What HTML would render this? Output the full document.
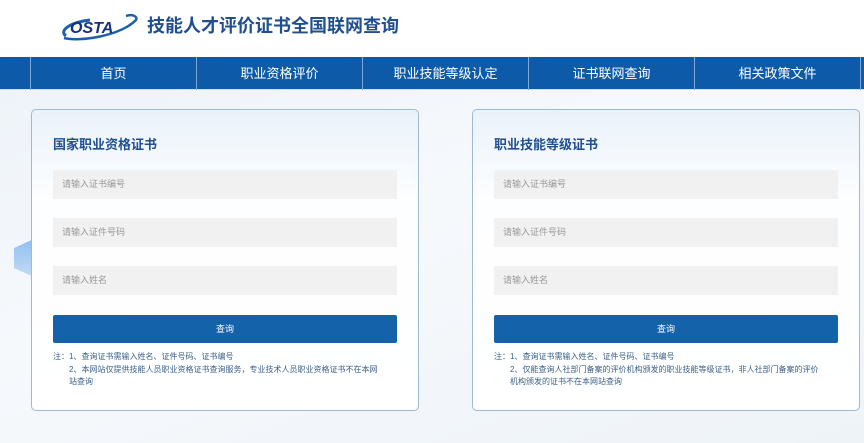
<!DOCTYPE html>
<html><head><meta charset="utf-8"><style>
*{margin:0;padding:0;box-sizing:border-box}
body{width:864px;height:443px;overflow:hidden;font-family:"Liberation Sans","Noto Sans CJK SC",sans-serif;background:#fff;position:relative}
.hdr{height:57px;background:#fff;position:relative}
.logo{position:absolute;left:60px;top:8px}
.title{position:absolute;left:147px;top:12px;font-size:18px;font-weight:bold;color:#1f4f8f}
.nav{position:absolute;top:57px;left:0;width:864px;height:33px;background:#0d5ba8;border-bottom:1px solid #cfe0f0}
.nav div{position:absolute;top:0;height:33px;line-height:33px;text-align:center;color:#fff;font-size:13px;border-left:1px solid #7fa9d4}
.body{position:absolute;top:90px;left:0;width:864px;height:353px;background:linear-gradient(160deg,#eef3f9 0%,#f6f9fc 40%,#eef3f8 100%)}
.hex{position:absolute;left:14px;top:238px;width:22px;height:40px;background:linear-gradient(180deg,#8fbef0,#c4dcf5);clip-path:polygon(100% 0,100% 100%,0 75%,0 25%)}
.card{position:absolute;top:109px;width:388px;height:302px;border:1px solid #9db9d3;border-radius:5px;background:linear-gradient(180deg,#eaf2fa 0%,#fdfeff 30%,#fff 100%)}
.card h3{position:absolute;left:21px;top:24px;font-size:13px;color:#1f4f8f;font-weight:bold}
.in{position:absolute;left:21px;width:344px;height:29px;background:#f1f1f1;color:#999;font-size:9px;line-height:29px;padding-left:9px}
.btn{position:absolute;left:21px;top:205px;width:344px;height:28px;background:#1463aa;border-radius:2px;color:#fff;font-size:9px;text-align:center;line-height:28px}
.note{position:absolute;left:21px;top:241px;width:332px;font-size:8px;line-height:12.5px;color:#3b5f88}
.note p{padding-left:16px}
</style></head><body>
<div class="hdr">
<svg class="logo" width="80" height="34" viewBox="0 0 80 34">
<path d="M6 28 C-2 22 12 14 30 12" stroke="#1d5fa8" stroke-width="3" fill="none"/>
<path d="M4 30 C20 34 60 28 76 12 C78 8 72 6 66 8" stroke="#1d5fa8" stroke-width="2.5" fill="none"/>
<text x="10" y="25" font-family="Liberation Sans,sans-serif" font-style="italic" font-weight="bold" font-size="16" fill="#15317a">OSTA</text>
</svg>
<div class="title">技能人才评价证书全国联网查询</div>
</div>
<div class="nav">
<div style="left:30px;width:166px">首页</div>
<div style="left:196px;width:166px">职业资格评价</div>
<div style="left:362px;width:166px">职业技能等级认定</div>
<div style="left:528px;width:166px">证书联网查询</div>
<div style="left:694px;width:166px">相关政策文件</div>
<div style="left:860px;width:10px"></div>
</div>
<div class="body"></div>
<div class="hex"></div>
<div class="card" style="left:31px">
<h3>国家职业资格证书</h3>
<div class="in" style="top:60px">请输入证书编号</div>
<div class="in" style="top:108px">请输入证件号码</div>
<div class="in" style="top:156px">请输入姓名</div>
<div class="btn">查询</div>
<div class="note">注：1、查询证书需输入姓名、证件号码、证书编号<p>2、本网站仅提供技能人员职业资格证书查询服务，专业技术人员职业资格证书不在本网站查询</p></div>
</div>
<div class="card" style="left:472px">
<h3>职业技能等级证书</h3>
<div class="in" style="top:60px">请输入证书编号</div>
<div class="in" style="top:108px">请输入证件号码</div>
<div class="in" style="top:156px">请输入姓名</div>
<div class="btn">查询</div>
<div class="note">注：1、查询证书需输入姓名、证件号码、证书编号<p>2、仅能查询人社部门备案的评价机构颁发的职业技能等级证书，非人社部门备案的评价机构颁发的证书不在本网站查询</p></div>
</div>
</body></html>
